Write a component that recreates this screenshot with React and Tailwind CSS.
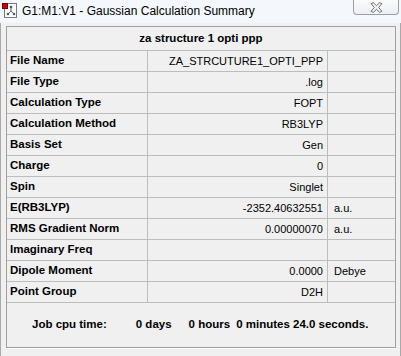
import React from "react";

const rows = [
  { label: "File Name", value: "ZA_STRCUTURE1_OPTI_PPP", unit: "" },
  { label: "File Type", value: ".log", unit: "" },
  { label: "Calculation Type", value: "FOPT", unit: "" },
  { label: "Calculation Method", value: "RB3LYP", unit: "" },
  { label: "Basis Set", value: "Gen", unit: "" },
  { label: "Charge", value: "0", unit: "" },
  { label: "Spin", value: "Singlet", unit: "" },
  { label: "E(RB3LYP)", value: "-2352.40632551", unit: "a.u." },
  { label: "RMS Gradient Norm", value: "0.00000070", unit: "a.u." },
  { label: "Imaginary Freq", value: "", unit: "" },
  { label: "Dipole Moment", value: "0.0000", unit: "Debye" },
  { label: "Point Group", value: "D2H", unit: "" },
];

function AppIcon() {
  return (
    <svg width="16" height="16" viewBox="0 0 16 16">
      <rect x="2.5" y="1.5" width="12" height="14" fill="#fff" stroke="#7a7a7a" />
      <line x1="9" y1="5" x2="9" y2="9" stroke="#666" />
      <line x1="9" y1="9" x2="6" y2="12" stroke="#666" />
      <line x1="9" y1="9" x2="12" y2="12" stroke="#666" />
      <circle cx="9" cy="5" r="1.3" fill="#555" />
      <circle cx="6" cy="12" r="1.3" fill="#555" />
      <circle cx="12" cy="12" r="1.3" fill="#555" />
      <rect x="0.5" y="1.5" width="5" height="5" fill="#d40000" stroke="#7a0000" />
    </svg>
  );
}

function CloseGlyph() {
  return (
    <svg width="13" height="11" viewBox="0 0 12 10">
      <path
        d="M1 1.5 L3 0.5 L6 3.3 L9 0.5 L11 1.5 L8 5 L11 8.5 L9 9.5 L6 6.7 L3 9.5 L1 8.5 L4 5 Z"
        fill="#f4f4f4"
        stroke="#6d6d6d"
        strokeWidth="0.9"
        strokeLinejoin="round"
      />
    </svg>
  );
}

export default function App() {
  return (
    <div
      className="w-[401px] h-[356px] flex flex-col bg-[#f0f0f0] text-black overflow-hidden"
      style={{ fontFamily: "'Liberation Sans', Arial, sans-serif" }}
    >
      {/* Title bar */}
      <div className="h-[23px] flex items-start bg-[#f4f7fb] relative">
        <div className="ml-[2px] mt-[2px]">
          <AppIcon />
        </div>
        <span className="ml-[4px] mt-[3px] text-[12px] leading-[16px]">
          G1:M1:V1 - Gaussian Calculation Summary
        </span>
        <div className="absolute left-[353px] top-0 w-[46px] h-[15px] border border-t-0 border-[#9a9fa6] rounded-b-[4px] bg-gradient-to-b from-[#fbfbfb] to-[#eceff3] flex items-center justify-center">
          <CloseGlyph />
        </div>
      </div>

      {/* Body */}
      <div className="flex-1 border-l border-r border-[#a9a9a9] pl-[5px] pr-[4px] pt-[3px] pb-[8px] flex">
        <div className="flex-1 flex flex-col border border-[#a0a0a0] shadow-[0_1px_0_#ffffff]">
          <div className="h-[24px] flex items-center justify-center border-b border-[#bdbdbd] font-bold text-[11.5px]">
            za structure 1 opti ppp
          </div>
          {rows.map((r) => (
            <div key={r.label} className="h-[21px] flex border-b border-[#bdbdbd] text-[11px]">
              <div className="w-[141px] border-r border-[#bdbdbd] pl-[3px] flex items-center font-bold text-[11.5px]">
                {r.label}
              </div>
              <div className="w-[180px] border-r border-[#bdbdbd] pr-[4px] flex items-center justify-end">
                {r.value}
              </div>
              <div className="flex-1 pl-[6px] flex items-center">{r.unit}</div>
            </div>
          ))}
          <div className="flex-1 flex items-center pl-[25px] font-bold text-[11.5px] whitespace-pre">
            <span>Job cpu time:</span>
            <span className="ml-[29px]">0 days</span>
            <span className="ml-[17px]">0 hours</span>
            <span className="ml-[6px]">0 minutes 24.0 seconds.</span>
          </div>
        </div>
      </div>
    </div>
  );
}
